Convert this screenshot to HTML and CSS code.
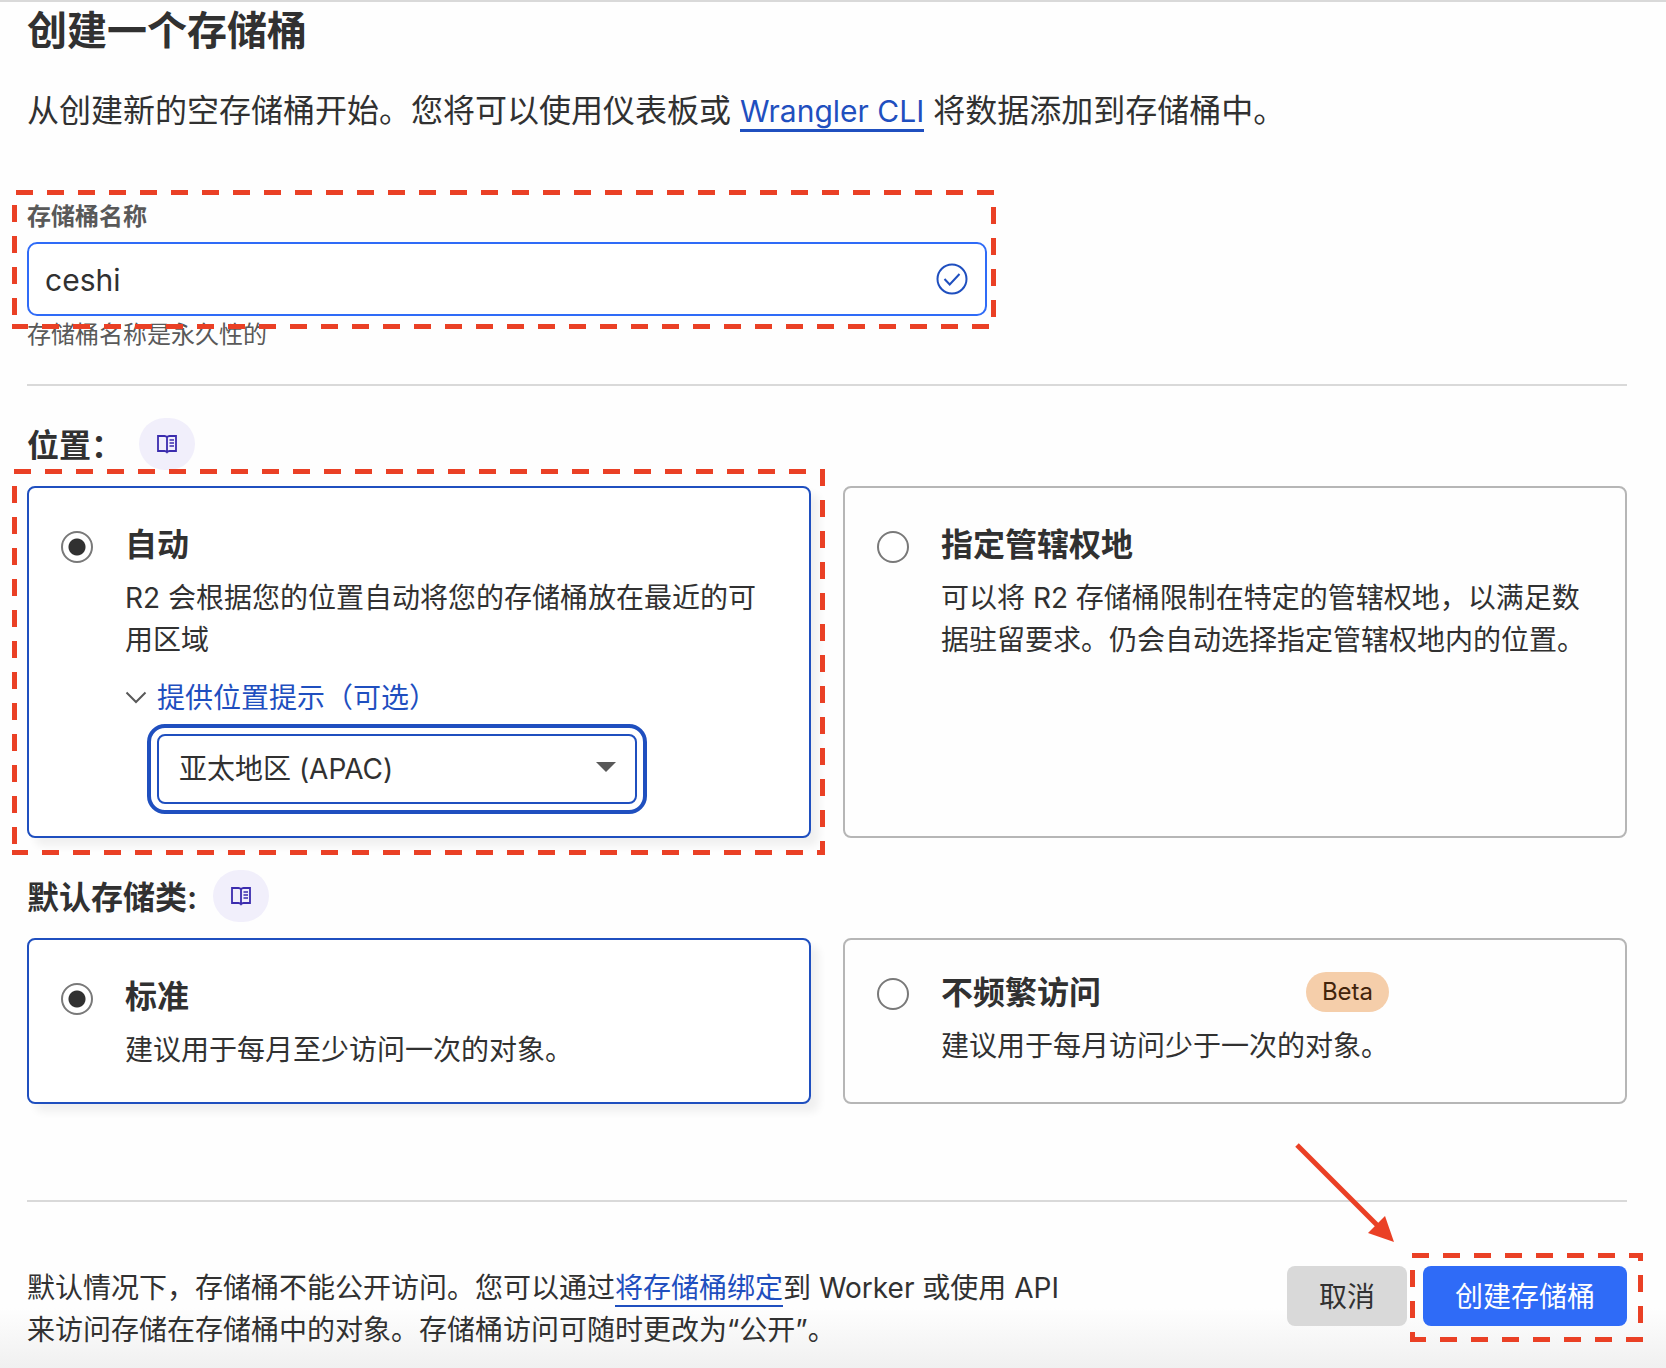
FILE: index.html
```html
<!DOCTYPE html>
<html lang="zh-CN">

<head>
    <meta charset="UTF-8">
    <meta name="viewport" content="width=device-width, initial-scale=1.0">
    <title>创建一个存储桶</title>
    <link rel="stylesheet" href="styles.css">
</head>

<body>
    <svg class="defs" aria-hidden="true">
        <symbol id="book" viewBox="0 0 20 20">
            <path d="M1 2h6.500Q9.200 2 10 3.200Q10.800 2 12.500 2H19v15h-6.500Q10.800 17 10 18.200Q9.200 17 7.500 17H1zM10 3v15" fill="none" stroke="currentColor" stroke-width="1.800" />
            <path d="M12.500 6H17M12.500 9H17M12.500 12H17" fill="none" stroke="currentColor" stroke-width="1.600" />
        </symbol>
    </svg>

    <main class="page">
        <h1>创建一个存储桶</h1>
        <p class="intro">从创建新的空存储桶开始。您将可以使用仪表板或 <a href="#">Wrangler CLI</a> 将数据添加到存储桶中。</p>

        <form>
            <div class="field">
                <label for="bucket-name">存储桶名称</label>
                <div class="input-wrap">
                    <input type="text" id="bucket-name" value="ceshi">
                    <svg class="check" viewBox="0 0 32 32" aria-hidden="true">
                        <circle cx="16" cy="16" r="14.500" />
                        <path d="M8.500 16l5.200 5.500L23.500 11" />
                    </svg>
                </div>
                <svg class="mark mark-name" aria-hidden="true">
                    <line x1="4" y1="0" x2="100%" y2="0" />
                    <line x1="100%" y1="17" x2="100%" y2="100%" />
                    <line x1="0" y1="15" x2="0" y2="100%" />
                    <line class="shift" x1="0" y1="100%" x2="100%" y2="100%" />
                </svg>
            </div>
            <p class="help">存储桶名称是永久性的</p>

            <hr>

            <div class="section-title">
                <h2>位置：</h2>
                <a class="docs" href="#" aria-label="文档"><svg><use href="#book" /></svg></a>
            </div>
            <div class="cards">
                <div class="card selected">
                    <input type="radio" name="location" id="loc-auto" checked>
                    <div class="card-body">
                        <label for="loc-auto">自动</label>
                        <p>R2 会根据您的位置自动将您的存储桶放在最近的可用区域</p>
                        <button type="button" class="toggle">
                            <svg viewBox="0 0 22 14" aria-hidden="true"><path d="M1.500 1.500L11 11L20.500 1.500" /></svg>
                            提供位置提示（可选）
                        </button>
                        <div class="select-wrap">
                            <select id="hint" aria-label="提供位置提示（可选）">
                                <option>亚太地区 (APAC)</option>
                            </select>
                        </div>
                    </div>
                    <svg class="mark mark-card" aria-hidden="true">
                        <line x1="2" y1="0" x2="100%" y2="0" />
                        <line x1="100%" y1="0" x2="100%" y2="100%" />
                        <line x1="0" y1="17" x2="0" y2="100%" />
                        <line class="shift" x1="0" y1="100%" x2="100%" y2="100%" />
                    </svg>
                </div>
                <div class="card">
                    <input type="radio" name="location" id="loc-jur">
                    <div class="card-body">
                        <label for="loc-jur">指定管辖权地</label>
                        <p>可以将 R2 存储桶限制在特定的管辖权地，以满足数据驻留要求。仍会自动选择指定管辖权地内的位置。</p>
                    </div>
                </div>
            </div>

            <div class="section-title">
                <h2>默认存储类:</h2>
                <a class="docs" href="#" aria-label="文档"><svg><use href="#book" /></svg></a>
            </div>
            <div class="cards">
                <div class="card selected">
                    <input type="radio" name="storage" id="st-standard" checked>
                    <div class="card-body">
                        <label for="st-standard">标准</label>
                        <p>建议用于每月至少访问一次的对象。</p>
                    </div>
                </div>
                <div class="card compact">
                    <input type="radio" name="storage" id="st-infrequent">
                    <div class="card-body">
                        <div class="label-row">
                            <label for="st-infrequent">不频繁访问</label>
                            <span class="beta">Beta</span>
                        </div>
                        <p>建议用于每月访问少于一次的对象。</p>
                    </div>
                </div>
            </div>

            <hr class="last">

            <div class="footer">
                <p>默认情况下，存储桶不能公开访问。您可以通过<a href="#">将存储桶绑定</a>到 Worker 或使用 API 来访问存储在存储桶中的对象。存储桶访问可随时更改为“公开”。</p>
                <div class="actions">
                    <button type="button" class="cancel">取消</button>
                    <div class="submit-wrap">
                        <button type="submit" class="submit">创建存储桶</button>
                        <svg class="mark mark-submit" aria-hidden="true">
                            <line x1="2" y1="0" x2="100%" y2="0" />
                            <line class="right" x1="100%" y1="0" x2="100%" y2="100%" />
                            <line x1="0" y1="17" x2="0" y2="100%" />
                            <line class="shift" x1="0" y1="100%" x2="100%" y2="100%" />
                        </svg>
                    </div>
                    <svg class="arrow" viewBox="0 0 102 102" aria-hidden="true">
                        <path d="M3 3L84 84" stroke="#ea4025" stroke-width="5" />
                        <path d="M100 100L74 91L91 74z" fill="#ea4025" />
                    </svg>
                </div>
            </div>
        </form>
    </main>
</body>

</html>
```

FILE: styles.css
```css
* {
    box-sizing: border-box;
}

body {
    margin: 0;
    font-family: Inter, "Noto Sans CJK SC", sans-serif;
    font-size: 28px;
    line-height: 42px;
    color: #313131;
    background-color: #fefefe;
}

h1, h2, p {
    margin: 0;
}

a {
    color: #1f4fbf;
    text-decoration: none;
    border-bottom: 2px solid #1f4fbf;
}

button, input, select {
    font: inherit;
    color: inherit;
    margin: 0;
}

.defs {
    display: none;
}

.page {
    min-height: 100vh;
    padding: 0 39px 15px 27px;
    border-top: 2px solid #d9d9d9;
    background: linear-gradient(to top, #f0f0f0, #fefefe) bottom / 100% 60px no-repeat;
}

h1 {
    font-size: 40px;
    line-height: 58px;
    font-weight: 600;
}

.intro {
    margin-top: 27px;
    font-size: 32px;
    line-height: 48px;
}

.intro a {
    font-size: 30px;
    border-bottom-width: 3px;
}

/* bucket name */
.field {
    position: relative;
    max-width: 960px;
    margin-top: 63px;
}

.field label {
    display: block;
    margin-bottom: 6px;
    font-size: 24px;
    line-height: 38px;
    font-weight: 600;
    color: #595959;
}

.input-wrap {
    position: relative;
}

.input-wrap input {
    display: block;
    width: 100%;
    height: 74px;
    padding: 2px 72px 0 16px;
    font-size: 30px;
    border: 2px solid #2f6bf7;
    border-radius: 10px;
    background-color: #fff;
}

.check {
    position: absolute;
    top: 21px;
    right: 19px;
    width: 32px;
    height: 32px;
    fill: none;
    stroke: #1f4fbf;
    stroke-width: 2;
}

.help {
    font-size: 24px;
    line-height: 38px;
    color: #595959;
}

hr {
    height: 2px;
    margin: 30px 0 32px;
    border: 0;
    background-color: #d9d9d9;
}

hr.last {
    margin: 96px 0 64px;
}

.section-title {
    display: flex;
    align-items: center;
    gap: 16px;
    margin-bottom: 16px;
}

h2 {
    padding-top: 3px;
    font-size: 32px;
    line-height: 48px;
    font-weight: 600;
}

.docs {
    display: flex;
    align-items: center;
    justify-content: center;
    width: 56px;
    height: 52px;
    border: 0;
    border-radius: 28px;
    background-color: #f1effb;
    color: #3b2cae;
}

.docs svg {
    width: 20px;
    height: 20px;
}

/* option cards */
.cards {
    display: grid;
    grid-template-columns: 1fr 1fr;
    gap: 32px;
}

.cards + .section-title {
    margin-top: 32px;
}

.card {
    position: relative;
    display: flex;
    align-items: flex-start;
    gap: 32px;
    padding: 32px 32px 31px;
    border: 2px solid #b6b6b6;
    border-radius: 8px;
}

.card.selected {
    border-color: #1f4fbf;
    background-color: #fff;
    box-shadow: 8px 8px 8px rgba(0, 0, 0, 0.06);
}

.card input[type="radio"] {
    appearance: none;
    flex: none;
    width: 32px;
    height: 32px;
    margin-top: 11px;
    border: 2px solid #797979;
    border-radius: 50%;
    background-color: #fff;
}

.card input[type="radio"]:checked {
    background: radial-gradient(circle, #313131 8px, #fff 9px);
}

.card label {
    display: block;
    font-size: 32px;
    line-height: 50px;
    font-weight: 600;
}

.card-body p {
    margin-top: 7px;
}

.card.compact input[type="radio"] {
    margin-top: 6px;
}

.label-row {
    display: flex;
    justify-content: space-between;
    align-items: flex-start;
}

.compact .label-row label {
    line-height: 42px;
}

.compact .card-body p {
    margin-top: 11px;
}

.beta {
    padding: 0 16px;
    font-size: 24px;
    line-height: 40px;
    border-radius: 20px;
    background-color: #f5ceaa;
    color: #43240b;
}

.toggle {
    display: flex;
    align-items: center;
    gap: 10px;
    margin-top: 16px;
    padding: 0;
    border: 0;
    background: none;
    color: #1f4fbf;
}

.toggle svg {
    width: 22px;
    height: 14px;
    fill: none;
    stroke: #595959;
    stroke-width: 2;
}

.select-wrap {
    position: relative;
    width: 480px;
    margin: 15px 0 1px 32px;
}

.select-wrap select {
    appearance: none;
    display: block;
    width: 100%;
    height: 70px;
    padding: 0 56px 0 20px;
    border: 2px solid #1f4fbf;
    border-radius: 8px;
    outline: 4px solid #1f4fbf;
    outline-offset: 6px;
    background-color: #fff;
}

.select-wrap::after {
    content: "";
    position: absolute;
    top: 28px;
    right: 21px;
    border: 10px solid transparent;
    border-top-color: #595959;
    border-bottom: 0;
    pointer-events: none;
}

/* footer */
.footer {
    display: flex;
    justify-content: space-between;
    align-items: flex-start;
}

.footer p {
    max-width: 1040px;
    padding-top: 1px;
}

.actions {
    position: relative;
    display: flex;
    gap: 16px;
}

.actions button {
    height: 60px;
    padding: 2px 32px 0;
    border: 0;
    border-radius: 8px;
    white-space: nowrap;
}

.cancel {
    background-color: #d9d9d9;
}

.submit {
    background-color: #2f6bf7;
    color: #fff;
}

.submit-wrap {
    position: relative;
}

/* red marks */
.mark {
    position: absolute;
    z-index: 2;
    pointer-events: none;
}

/* half of each stroke is clipped by the svg edge */
.mark line {
    stroke: #ea4025;
    stroke-width: 10;
    stroke-dasharray: 17 14;
}

.mark .shift {
    stroke-dashoffset: 1;
}

.mark .right {
    stroke-dashoffset: 9;
}

.mark-name {
    top: -8px;
    left: -15px;
    width: calc(100% + 24px);
    height: calc(100% + 21px);
}

.mark-card {
    top: -19px;
    left: -17px;
    width: calc(100% + 33px);
    height: calc(100% + 38px);
}

.mark-submit {
    top: -13px;
    left: -13px;
    width: calc(100% + 29px);
    height: calc(100% + 29px);
}

.arrow {
    position: absolute;
    top: -124px;
    left: 7px;
    width: 102px;
    height: 102px;
}
```
